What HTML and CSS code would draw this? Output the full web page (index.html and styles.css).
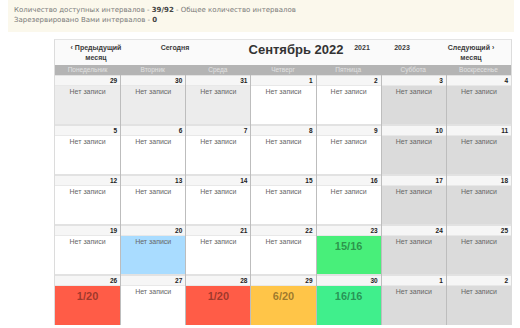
FILE: index.html
```html
<!DOCTYPE html>
<html lang="ru">
<head>
<meta charset="utf-8">
<link rel="stylesheet" href="styles.css">
</head>
<body>
<div class="info">
  <div>Количество доступных интервалов - <b>39/92</b> - Общее количество интервалов</div>
  <div>Зарезервировано Вами интервалов - <b>0</b></div>
</div>
<div class="cal">
  <div class="nav">
    <div class="prev">‹ Предыдущий<br>месяц</div>
    <div class="today">Сегодня</div>
    <div class="title">Сентябрь 2022</div>
    <div class="y1">2021</div>
    <div class="y2">2023</div>
    <div class="next">Следующий ›<br>месяц</div>
  </div>
  <div class="dows">
    <div>Понедельник</div><div>Вторник</div><div>Среда</div><div>Четверг</div><div>Пятница</div><div>Суббота</div><div>Воскресенье</div>
  </div>
  <div class="week">
    <div class="day past"><div class="num">29</div><div class="body">Нет записи</div></div>
    <div class="day past"><div class="num">30</div><div class="body">Нет записи</div></div>
    <div class="day past"><div class="num">31</div><div class="body">Нет записи</div></div>
    <div class="day"><div class="num">1</div><div class="body">Нет записи</div></div>
    <div class="day"><div class="num">2</div><div class="body">Нет записи</div></div>
    <div class="day off"><div class="num">3</div><div class="body">Нет записи</div></div>
    <div class="day off"><div class="num">4</div><div class="body">Нет записи</div></div>
  </div>
  <div class="week">
    <div class="day"><div class="num">5</div><div class="body">Нет записи</div></div>
    <div class="day"><div class="num">6</div><div class="body">Нет записи</div></div>
    <div class="day"><div class="num">7</div><div class="body">Нет записи</div></div>
    <div class="day"><div class="num">8</div><div class="body">Нет записи</div></div>
    <div class="day"><div class="num">9</div><div class="body">Нет записи</div></div>
    <div class="day off"><div class="num">10</div><div class="body">Нет записи</div></div>
    <div class="day off"><div class="num">11</div><div class="body">Нет записи</div></div>
  </div>
  <div class="week">
    <div class="day"><div class="num">12</div><div class="body">Нет записи</div></div>
    <div class="day"><div class="num">13</div><div class="body">Нет записи</div></div>
    <div class="day"><div class="num">14</div><div class="body">Нет записи</div></div>
    <div class="day"><div class="num">15</div><div class="body">Нет записи</div></div>
    <div class="day"><div class="num">16</div><div class="body">Нет записи</div></div>
    <div class="day off"><div class="num">17</div><div class="body">Нет записи</div></div>
    <div class="day off"><div class="num">18</div><div class="body">Нет записи</div></div>
  </div>
  <div class="week">
    <div class="day"><div class="num">19</div><div class="body">Нет записи</div></div>
    <div class="day sel"><div class="num">20</div><div class="body">Нет записи</div></div>
    <div class="day"><div class="num">21</div><div class="body">Нет записи</div></div>
    <div class="day"><div class="num">22</div><div class="body">Нет записи</div></div>
    <div class="day green"><div class="num">23</div><div class="body count">15/16</div></div>
    <div class="day off"><div class="num">24</div><div class="body">Нет записи</div></div>
    <div class="day off"><div class="num">25</div><div class="body">Нет записи</div></div>
  </div>
  <div class="week last">
    <div class="day red"><div class="num">26</div><div class="body count">1/20</div></div>
    <div class="day"><div class="num">27</div><div class="body">Нет записи</div></div>
    <div class="day red"><div class="num">28</div><div class="body count">1/20</div></div>
    <div class="day orange"><div class="num">29</div><div class="body count">6/20</div></div>
    <div class="day green2"><div class="num">30</div><div class="body count">16/16</div></div>
    <div class="day off"><div class="num">1</div><div class="body">Нет записи</div></div>
    <div class="day off"><div class="num">2</div><div class="body">Нет записи</div></div>
  </div>
</div>
</body>
</html>
```
FILE: styles.css
```css
html, body {
  margin: 0;
  padding: 0;
  background: #fff;
}
body {
  font-family: "Liberation Sans", Arial, sans-serif;
  color: #333;
}
.info {
  margin: 0 6px 0 8px;
  height: 32px;
  box-sizing: border-box;
  padding: 5px 6px 0 6px;
  background: #fbf8ec;
  font-family: "DejaVu Sans", Verdana, sans-serif;
  font-size: 7px;
  line-height: 10px;
  color: #7a7a7a;
}
.info b {
  color: #444;
  font-weight: bold;
}
.cal {
  margin: 7px 0 0 54px;
  width: 458px;
  background: #fafafa;
  border-left: 1px solid #dcdcdc;
  border-right: 1px solid #dcdcdc;
  border-top: 1px solid #e4e4e4;
  box-sizing: border-box;
  font-size: 7px;
}
.nav {
  height: 25px;
  display: flex;
  font-weight: bold;
  color: #3a3a3a;
  line-height: 10px;
}
.nav > div {
  text-align: center;
  padding-top: 3px;
  box-sizing: border-box;
}
.nav .prev { width: 82px; }
.nav .today { width: 76px; }
.nav .title {
  width: 138px;
  padding-left: 28px;
  font-size: 13px;
  line-height: 14px;
  padding-top: 3px;
  color: #333;
}
.nav .y1 { width: 22px; }
.nav .y2 { width: 58px; }
.nav .next { width: 80px; }
.dows {
  display: grid;
  grid-template-columns: repeat(7, 1fr);
  height: 10px;
  background: #b4b4b4;
  color: #e2e2e2;
  line-height: 10px;
  text-align: center;
  font-size: 6.5px;
}
.week {
  display: grid;
  grid-template-columns: repeat(7, 1fr);
  height: 50px;
}
.day {
  display: flex;
  flex-direction: column;
  border-left: 1px solid #bdbdbd;
  background: #fff;
}
.day:first-child {
  border-left: 0;
}
.num {
  height: 11px;
  box-sizing: border-box;
  background: #f6f6f6;
  border-top: 1px solid #e2e2e2;
  border-bottom: 1px solid #e8e8e8;
  text-align: right;
  padding-right: 3px;
  font-weight: bold;
  line-height: 10px;
  font-size: 6.5px;
  color: #222;
}
.body {
  flex: 1;
  text-align: center;
  color: #666;
  padding-top: 1px;
  line-height: 9px;
  border-bottom: 1px solid #e2e2e2;
}
.week.last .body {
  border-bottom: 0;
}
.past .body { background: #ececec; }
.off .body { background: #dbdbdb; }
.sel .body { background: #a9dcff; }
.green .body { background: #48ef7a; }
.green2 .body { background: #40ef8c; }
.red .body { background: #ff5c47; }
.orange .body { background: #ffc548; }
.count {
  font-size: 11px;
  font-weight: bold;
  line-height: 14px;
  padding-top: 3px;
  color: rgba(0, 0, 0, 0.4);
}
```
